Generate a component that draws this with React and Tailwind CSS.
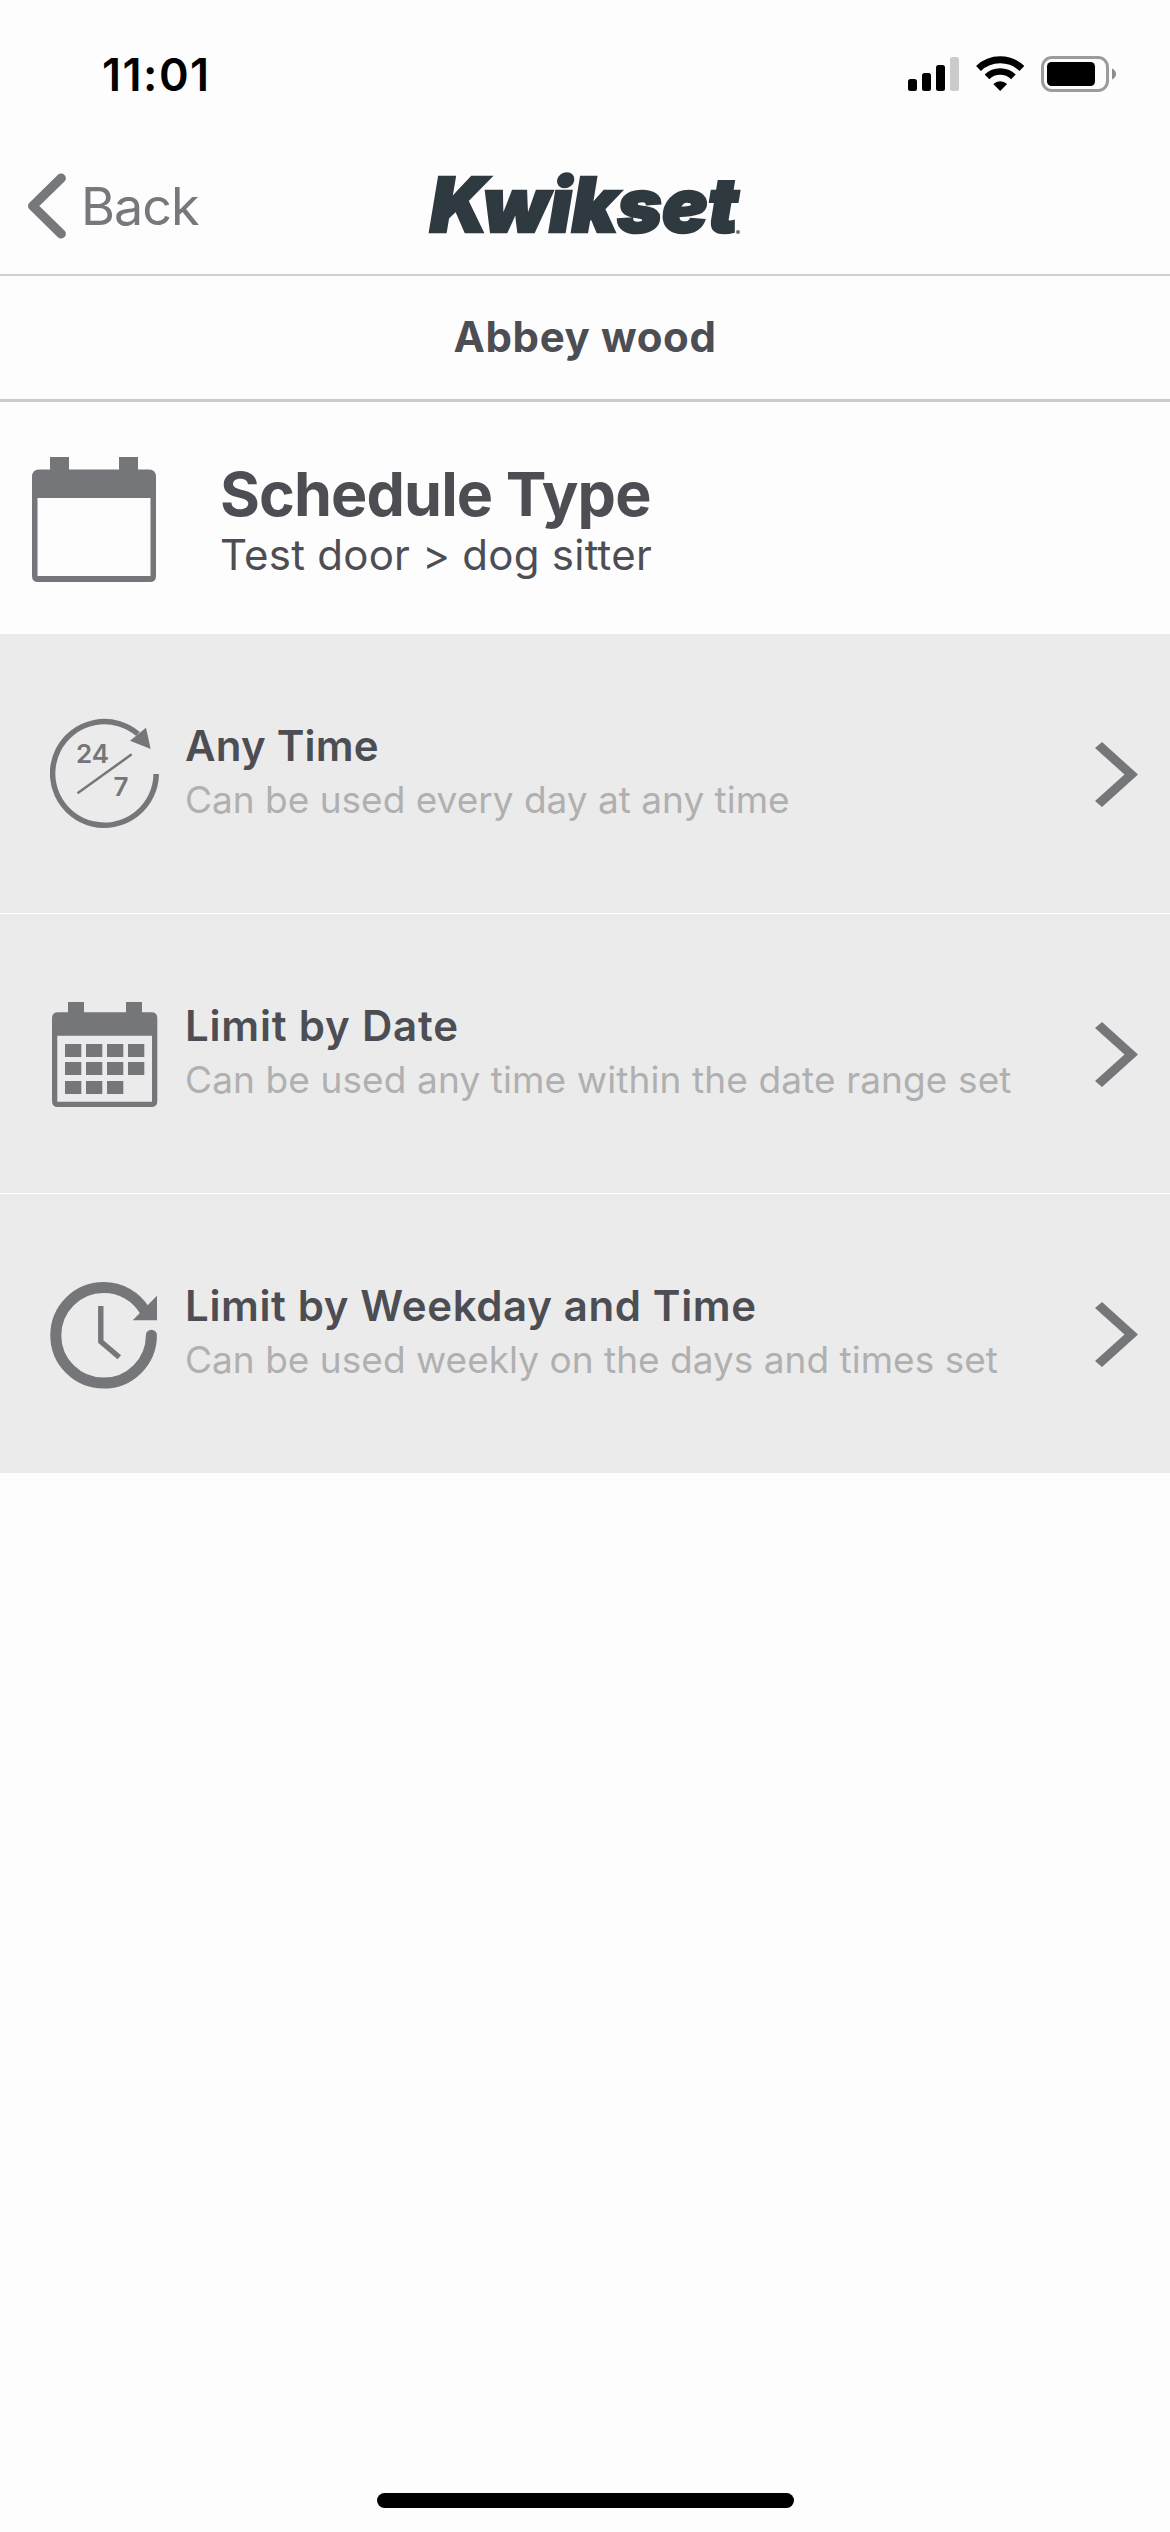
import React from 'react';

function StatusBar() {
  return (
    <div className="h-[138px] flex items-start justify-between pl-[102px] pr-[54px] pt-[47px]">
      <span className="text-[45px] leading-[56px] font-semibold text-black tracking-[1.5px]">11:01</span>
      <svg width="208" height="36" viewBox="0 0 208 36" className="mt-[9px]">
        <rect x="0" y="23" width="9" height="12" rx="2.5" />
        <rect x="14" y="17" width="9" height="18" rx="2.5" />
        <rect x="28" y="9" width="9" height="26" rx="2.5" />
        <rect x="42" y="1" width="9" height="34" rx="2.5" fill="#cbcbcb" />
        <path d="M70.5 13.5A31.5 31.5 0 0 1 113.9 13.5" fill="none" stroke="#000" strokeWidth="7" transform="translate(0 -1)" />
        <path d="M79 21.6A19 19 0 0 1 105.4 21.6" fill="none" stroke="#000" strokeWidth="6.6" transform="translate(0 -.8)" />
        <path d="M92.2 35L85.3 28A10 10 0 0 1 99.1 28Z" />
        <rect x="134.5" y="1.5" width="65" height="33" rx="9.5" fill="none" stroke="#9b9b9b" strokeWidth="3" />
        <rect x="139" y="6" width="48" height="24" rx="4.5" />
        <path d="M204 12.5Q208 14.5 208 18T204 23.5Z" fill="#8e8e8e" />
      </svg>
    </div>
  );
}

function NavBar() {
  return (
    <div className="h-[138px] grid grid-cols-3 items-center border-b-2 border-[#cfcfcf]">
      <div className="flex items-center pl-[26px] text-[#77787c]">
        <svg width="42" height="68" viewBox="0 0 42 68" fill="none" stroke="currentColor" strokeWidth="9.4" strokeLinecap="round" strokeLinejoin="round">
          <path d="M35.2 6.2L6.7 34L35.2 61.8" />
        </svg>
        <span className="ml-[13px] mt-[2px] text-[52px] leading-[64px] tracking-[-1px]">Back</span>
      </div>
      <svg width="340" height="120" viewBox="0 0 340 120" className="mx-auto">
        <text
          x="15"
          y="86"
          textLength="308"
          lengthAdjust="spacingAndGlyphs"
          className="text-[75px] font-black italic font-[Inter,sans-serif]"
          fill="#2e3940"
          stroke="#2e3940"
          strokeWidth="2.6"
        >
          Kwikset
        </text>
        <circle cx="323" cy="86" r="2" fill="#6d7479" />
      </svg>
    </div>
  );
}

function EmptyCalendarIcon() {
  return (
    <svg width="124" height="126" viewBox="0 0 124 126" fill="#75767a">
      <rect x="18" y="0" width="19" height="20" />
      <rect x="87" y="0" width="19" height="20" />
      <path fillRule="evenodd" d="M7 12.5H117Q124 12.5 124 20V119Q124 125 118 125H6Q0 125 0 119V20Q0 12.5 7 12.5ZM5.5 41V119H118.5V41Z" />
    </svg>
  );
}

function AnyTimeIcon() {
  return (
    <svg width="110" height="111" viewBox="0 0 110 111" fill="#75767a">
      <path d="M106.2 56A51.8 51.8 0 1 1 88 16" fill="none" stroke="#75767a" strokeWidth="5.5" />
      <path d="M96 9.7L100.7 31L80 22.7Z" />
      <path d="M27.5 75.3L81.7 36.3" stroke="#75767a" strokeWidth="2.5" />
      <text x="26" y="44.7" textLength="33" className="text-[26px] font-semibold">24</text>
      <text x="63.5" y="78" className="text-[26px] font-semibold">7</text>
    </svg>
  );
}

function DateIcon() {
  const cells = [
    [15, 46], [36, 46], [57, 46], [78, 46],
    [15, 64], [36, 64], [57, 64], [78, 64],
    [15, 83], [36, 83], [57, 83],
  ];
  return (
    <svg width="110" height="111" viewBox="0 0 110 111" fill="#75767a">
      <rect x="18" y="4" width="16" height="16" />
      <rect x="76" y="4" width="16" height="16" />
      <path fillRule="evenodd" d="M8 14.3H101.3Q107.3 14.3 107.3 20V103Q107.3 109 101.3 109H8Q2 109 2 103V20Q2 14.3 8 14.3ZM7.3 37.7V103.7H102V37.7Z" />
      {cells.map(([x, y]) => (
        <rect key={`${x}-${y}`} x={x} y={y} width="16.3" height="13" />
      ))}
    </svg>
  );
}

function WeekdayIcon() {
  return (
    <svg width="110" height="111" viewBox="0 0 110 111" fill="none" stroke="#75767a">
      <path d="M53.5 9.5A47.8 47.8 0 1 0 101.4 57.2" strokeWidth="11" strokeLinecap="round" />
      <path d="M53.5 9.5A47.8 47.8 0 0 1 95 33" strokeWidth="11" />
      <path d="M107 17.7V42.3H82.7Z" fill="#75767a" stroke="none" />
      <path d="M50.8 28V63.5L69.3 79.3" strokeWidth="5.4" />
    </svg>
  );
}

const options = [
  {
    icon: AnyTimeIcon,
    title: 'Any Time',
    titleClass: 'tracking-[0.2px]',
    text: 'Can be used every day at any time',
    textClass: 'tracking-normal',
  },
  {
    icon: DateIcon,
    title: 'Limit by Date',
    titleClass: 'tracking-[0.8px]',
    text: 'Can be used any time within the date range set',
    textClass: 'tracking-[0.11px]',
  },
  {
    icon: WeekdayIcon,
    title: 'Limit by Weekday and Time',
    titleClass: 'tracking-[0.63px]',
    text: 'Can be used weekly on the days and times set',
    textClass: 'tracking-[0.02px]',
  },
];

function OptionRow({ icon: Icon, title, titleClass, text, textClass }) {
  return (
    <div className="h-[279px] flex items-center pl-[50px] pr-[32px] bg-[#ebebeb]">
      <Icon />
      <div className="ml-[25px] mb-[2px] flex-1 whitespace-nowrap">
        <h3 className={`text-[42px] leading-[54px] font-semibold text-[#4d4e53] ${titleClass}`}>{title}</h3>
        <p className={`text-[37px] leading-[54px] text-[#b0b0b0] ${textClass}`}>{text}</p>
      </div>
      <svg width="43" height="65" viewBox="0 0 43 65" fill="#75767a" className="mt-[2px]">
        <path d="M7 0L43 32.5L7 65L0 59L29.5 32.5L0 6Z" />
      </svg>
    </div>
  );
}

export default function App() {
  return (
    <div className="w-[1170px] h-[2532px] flex flex-col bg-[#fdfdfd] overflow-hidden font-[Inter,sans-serif]">
      <StatusBar />
      <NavBar />
      <div className="h-[126px] flex items-center justify-center border-b-3 border-[#cbcbcb]">
        <h1 className="mb-px text-[42px] leading-[54px] font-bold tracking-[0.6px] text-[#4d4e53]">Abbey wood</h1>
      </div>
      <div className="h-[232px] flex items-center pl-[32px] pt-[4px] text-[#4d4e53]">
        <EmptyCalendarIcon />
        <div className="ml-[64px] mt-[3px] whitespace-nowrap">
          <h2 className="text-[61px] leading-[66px] font-bold tracking-[-0.9px]">Schedule Type</h2>
          <p className="text-[42px] leading-[55px] tracking-[0.25px]">Test door &gt; dog sitter</p>
        </div>
      </div>
      <div className="flex flex-col gap-px">
        {options.map((option) => (
          <OptionRow key={option.title} {...option} />
        ))}
      </div>
      <div className="mt-auto mb-[24px] mx-auto w-[417px] h-[15px] rounded-full bg-black" />
    </div>
  );
}
